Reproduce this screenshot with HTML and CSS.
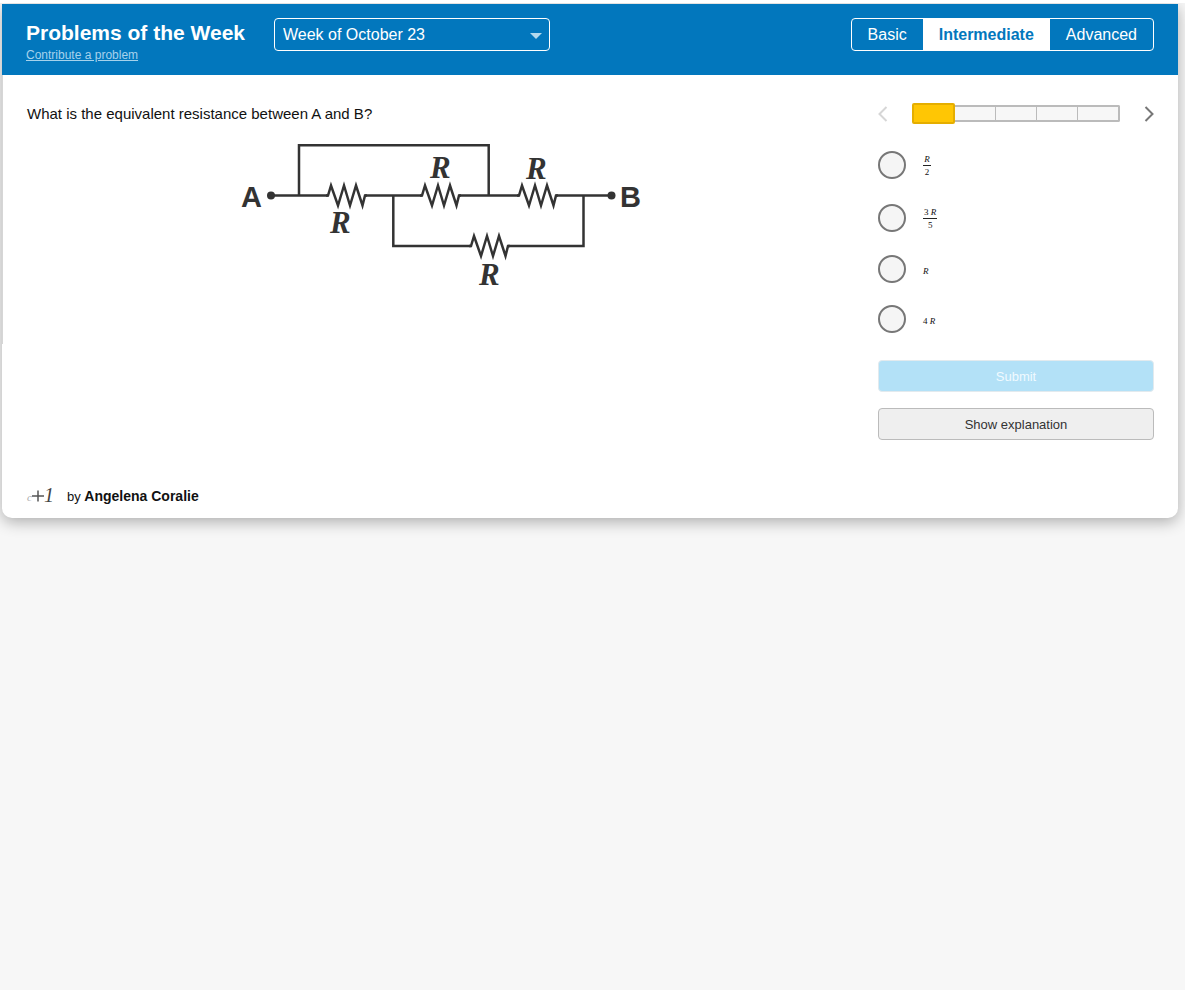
FILE: index.html
```html
<!DOCTYPE html>
<html lang="en">
<head>
<meta charset="utf-8">
<title>Problems of the Week</title>
<link rel="stylesheet" href="styles.css">
</head>
<body>
<div class="page">
<main class="card">
  <header class="topbar">
    <div class="brand">
      <h1>Problems of the Week</h1>
      <a href="#contribute">Contribute a problem</a>
    </div>
    <div class="week">
      <select aria-label="Week"><option>Week of October 23</option></select>
      <svg class="caret" width="12" height="6" viewBox="0 0 12 6" aria-hidden="true"><path d="M0 0H12L6 6Z"/></svg>
    </div>
    <div class="levels" role="group" aria-label="Difficulty">
      <button type="button">Basic</button>
      <button type="button" class="active" aria-pressed="true">Intermediate</button>
      <button type="button">Advanced</button>
    </div>
  </header>
  <div class="content">
    <article class="question">
      <p>What is the equivalent resistance between A and B?</p>
      <svg class="circuit" width="404" height="156" viewBox="0 0 404 156" role="img" aria-label="Circuit of four resistors between A and B">
        <defs><path id="res" d="M-2 0H0L3 -10L10 10L16 -10L22 10L28 -10L34.5 10L37 0H39"/></defs>
        <g class="wire">
          <path d="M31 55.5H88M125 55.5H182M219 55.5H279M316 55.5H371"/>
          <path d="M59 55.5V5.2H248.7V55.5"/>
          <path d="M153.3 55.5V106H231M268 106H343.5V55.5"/>
          <use href="#res" x="88" y="55.5"/>
          <use href="#res" x="182" y="55.5"/>
          <use href="#res" x="279" y="55.5"/>
          <use href="#res" x="231" y="106"/>
        </g>
        <g class="ink">
          <circle cx="31" cy="55.5" r="4"/>
          <circle cx="371.5" cy="55.5" r="4"/>
          <text class="node" x="1" y="67">A</text>
          <text class="node" x="380" y="67">B</text>
          <text class="res-name" x="90" y="93">R</text>
          <text class="res-name" x="190" y="38">R</text>
          <text class="res-name" x="286" y="39">R</text>
          <text class="res-name" x="239" y="145">R</text>
        </g>
      </svg>
    </article>
    <form class="answers">
      <nav class="steps" aria-label="Problems">
        <button type="button" aria-label="Previous" disabled><svg width="10" height="16" viewBox="0 0 10 16"><path d="M8.5 1L1.5 8L8.5 15"/></svg></button>
        <div class="progress"><span class="current"></span><span class="rest"><i></i><i></i><i></i><i></i></span></div>
        <button type="button" aria-label="Next"><svg width="10" height="16" viewBox="0 0 10 16"><path d="M1.5 1L8.5 8L1.5 15"/></svg></button>
      </nav>
      <div class="options">
        <label class="tall"><input type="radio" name="answer"><span class="frac"><span><em>R</em></span><span>2</span></span></label>
        <label class="tall"><input type="radio" name="answer"><span class="frac"><span>3 <em>R</em></span><span>5</span></span></label>
        <label><input type="radio" name="answer"><span class="math"><em>R</em></span></label>
        <label><input type="radio" name="answer"><span class="math">4 <em>R</em></span></label>
      </div>
      <button type="submit" class="btn submit" disabled>Submit</button>
      <button type="button" class="btn">Show explanation</button>
    </form>
  </div>
  <footer class="author">
    <svg width="30" height="24" viewBox="0 0 30 24" aria-hidden="true">
      <text class="x" x="1" y="17">c</text>
      <path d="M6 12H18M12 6.500V17.500"/>
      <text x="18" y="18">1</text>
    </svg>
    <span>by <b>Angelena Coralie</b></span>
  </footer>
</main>
</div>
</body>
</html>
```
FILE: styles.css
```css
* { box-sizing: border-box; }
html { background: #f7f7f7; }
body {
  margin: 0;
  border-top: 3px solid #fff;
  color: #111;
  font: 15px/20px "Liberation Sans", Arial, sans-serif;
}
button, select { font: inherit; }
.page { overflow: hidden; padding: 1px 7px 40px 2px; }
.card {
  background: #fff;
  border-radius: 0 0 10px 10px;
  box-shadow: 0 4px 15px rgba(0, 0, 0, .3);
}

.topbar {
  display: flex;
  align-items: flex-start;
  gap: 24px;
  padding: 14px 24px 10px;
  background: #0277bd;
  color: #fff;
}
.brand { width: 224px; height: 47px; }
.brand h1 { margin: 0; font-size: 21px; line-height: 29px; white-space: nowrap; }
.brand a { display: block; font-size: 12px; line-height: 16px; color: #a6d2ec; }
.week { position: relative; width: 276px; }
.week select {
  display: block;
  width: 100%;
  height: 33px;
  padding: 0 8px;
  border: 1px solid #fff;
  border-radius: 4px;
  appearance: none;
  background: transparent;
  color: #fff;
  font-size: 16px;
}
.caret { position: absolute; right: 8px; top: 15px; fill: #b3d9ee; pointer-events: none; }
.levels {
  display: flex;
  height: 33px;
  margin-left: auto;
  overflow: hidden;
  border: 1px solid #fff;
  border-radius: 4px;
}
.levels button {
  padding: 0 16px;
  border: 0;
  background: transparent;
  color: #fff;
  font-size: 16px;
}
.levels .active { background: #fff; color: #0277bd; font-weight: bold; }

.content {
  display: grid;
  grid-template-columns: 1fr 276px;
  align-items: start;
  padding-right: 24px;
}
.question {
  padding: 29px 22px 48px 24px;
  border-left: 1px solid #d6d6d6;
}
.question p { margin: 0 0 16px; }
.circuit { display: block; margin: 0 auto; }
.wire { fill: none; stroke: #333; stroke-width: 2.5; }
.ink { fill: #333; }
.node { font: bold 29px "Liberation Sans", Arial, sans-serif; }
.res-name { font: italic bold 31px "Liberation Serif", serif; }

.answers { padding-top: 28px; }
.steps { display: flex; align-items: center; justify-content: space-between; height: 21px; }
.steps button { display: flex; padding: 0; border: 0; background: none; }
.steps svg { fill: none; stroke: #777; stroke-width: 2; }
.steps button:disabled svg { stroke: #d6d6d6; }
.progress { display: flex; align-items: center; width: 208px; }
.current { width: 43px; height: 21px; border: 2px solid #e5ae00; border-radius: 2px; background: #ffc604; }
.rest {
  display: flex;
  flex: 1;
  height: 17px;
  border: 2px solid #bbb;
  border-left: 0;
  border-radius: 0 2px 2px 0;
  background: #f7f7f7;
}
.rest i { flex: 1; }
.rest i + i { border-left: 1px solid #bbb; }
.options { display: flex; flex-direction: column; gap: 22px; margin: 25px 0 27px; }
.options label { display: flex; align-items: center; gap: 17px; height: 28px; }
.options .tall { height: 31px; }
.options input {
  width: 28px;
  height: 28px;
  margin: 0;
  border: 2px solid #777;
  border-radius: 50%;
  appearance: none;
  background: #f5f5f5;
}
.math, .frac { font: 9px/10px "Liberation Serif", serif; }
.math { padding-top: 4px; }
.frac { display: flex; flex-direction: column; padding-top: 2px; text-align: center; }
.frac span { min-width: 8px; padding: 0 1px; }
.frac span:first-child { padding-bottom: 1px; }
.frac span + span { padding-top: 1px; border-top: 1px solid #222; }
.btn {
  display: block;
  width: 100%;
  height: 32px;
  padding: 2px 0 0;
  border: 1px solid #bbb;
  border-radius: 4px;
  background: #efefef;
  color: #333;
  font-size: 13px;
}
.submit { margin-bottom: 16px; border-color: #e2eaee; background: #b3e1f7; color: #f0faff; }

.author {
  display: flex;
  align-items: center;
  gap: 11px;
  padding: 44px 24px 10px;
  font-size: 13px;
}
.author b { font-size: 14px; }
.author svg { fill: #444; font: italic 20px "Liberation Serif", serif; }
.author path { stroke: #555; stroke-width: 1.5; }
.author .x { fill: #aaa; font-size: 11px; }
```
